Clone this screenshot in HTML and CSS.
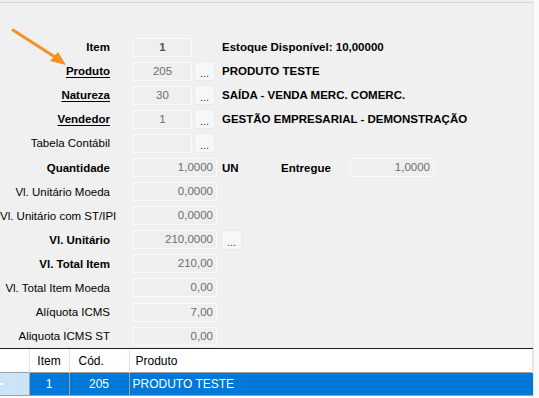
FILE: index.html
```html
<!DOCTYPE html>
<html lang="pt-BR">
<head>
    <meta charset="UTF-8">
    <title>Item do Pedido</title>
    <link rel="stylesheet" href="styles.css">
</head>
<body>
    <div class="window">
        <div class="main">
            <div class="topline"></div>

            <!-- seta de destaque -->
            <svg class="arrow" width="70" height="70" viewBox="0 0 70 70">
                <line x1="13" y1="30" x2="58" y2="59" stroke="#f7901e" stroke-width="3" stroke-linecap="round"/>
                <polygon points="66,65 50,61 58,52" fill="#f7901e"/>
            </svg>

            <div class="form">
                <div class="row">
                    <label class="lbl bold">Item</label>
                    <div class="box short center strong">1</div>
                    <span class="info spaced">Estoque Disponível: 10,00000</span>
                </div>
                <div class="row">
                    <label class="lbl bold link">Produto</label>
                    <div class="box short center">205</div>
                    <button class="dots">...</button>
                    <span class="info">PRODUTO TESTE</span>
                </div>
                <div class="row">
                    <label class="lbl bold link">Natureza</label>
                    <div class="box short center">30</div>
                    <button class="dots">...</button>
                    <span class="info">SAÍDA - VENDA MERC. COMERC.</span>
                </div>
                <div class="row">
                    <label class="lbl bold link">Vendedor</label>
                    <div class="box short center">1</div>
                    <button class="dots">...</button>
                    <span class="info">GESTÃO EMPRESARIAL - DEMONSTRAÇÃO</span>
                </div>
                <div class="row">
                    <label class="lbl">Tabela Contábil</label>
                    <div class="box short"></div>
                    <button class="dots">...</button>
                </div>
                <div class="row">
                    <label class="lbl bold">Quantidade</label>
                    <div class="box long">1,0000</div>
                    <span class="info unit">UN</span>
                    <span class="info entregue">Entregue</span>
                    <div class="box long">1,0000</div>
                </div>
                <div class="row">
                    <label class="lbl">Vl. Unitário Moeda</label>
                    <div class="box long">0,0000</div>
                </div>
                <div class="row">
                    <label class="lbl">Vl. Unitário com ST/IPI</label>
                    <div class="box long">0,0000</div>
                </div>
                <div class="row">
                    <label class="lbl bold">Vl. Unitário</label>
                    <div class="box long">210,0000</div>
                    <button class="dots wide">...</button>
                </div>
                <div class="row">
                    <label class="lbl bold">Vl. Total Item</label>
                    <div class="box long">210,00</div>
                </div>
                <div class="row">
                    <label class="lbl">Vl. Total Item Moeda</label>
                    <div class="box long">0,00</div>
                </div>
                <div class="row">
                    <label class="lbl">Alíquota ICMS</label>
                    <div class="box long">7,00</div>
                </div>
                <div class="row">
                    <label class="lbl">Aliquota ICMS ST</label>
                    <div class="box long">0,00</div>
                </div>
            </div>

            <!-- grade de itens -->
            <div class="gridwrap">
                <table class="grid">
                    <tr class="head">
                        <td class="c0"></td>
                        <td class="c1">Item</td>
                        <td class="c2">Cód.</td>
                        <td class="c3">Produto</td>
                    </tr>
                    <tr class="sel">
                        <td class="c0"><span class="mark"></span></td>
                        <td class="c1">1</td>
                        <td class="c2 mid">205</td>
                        <td class="c3">PRODUTO TESTE</td>
                    </tr>
                </table>
            </div>
        </div>
        <div class="side"></div>
    </div>
</body>
</html>
```

FILE: styles.css
```css
*{
    margin: 0;
    padding: 0;
    box-sizing: border-box;
}
body{
    width: 539px;
    height: 398px;
    overflow: hidden;
    background: #f0f0f0;
    font-family: "Liberation Sans", Arial, sans-serif;
    font-size: 11px;
    color: #000;
}
.window{
    display: flex;
    height: 398px;
}
.main{
    width: 533px;
    position: relative;
    display: flex;
    flex-direction: column;
}
.side{
    width: 6px;
    background: #fafafa;
    border-left: 1px solid #e8e8e8;
}
.topline{
    height: 3px;
    border-bottom: 1px solid #d6d6d6;
}
.arrow{
    position: absolute;
    left: 0;
    top: 0;
}
.form{
    padding-top: 32px;
    height: 345px;
    flex-shrink: 0;
}
.row{
    height: 24.1px;
    display: flex;
    align-items: center;
}
.lbl{
    width: 110px;
    text-align: right;
    margin-right: 23px;
    white-space: nowrap;
    font-size: 11.5px;
}
.bold{
    font-weight: bold;
}
.link{
    text-decoration: underline;
    text-underline-offset: 2px;
}
.box{
    height: 19px;
    line-height: 17px;
    border: 1px solid #fafafa;
    background: #efefef;
    color: #6d6d6d;
    font-size: 11.5px;
    text-align: right;
    padding: 0 3px;
}
.short{
    width: 59px;
}
.long{
    width: 84px;
}
.center{
    text-align: center;
}
.strong{
    font-weight: bold;
    color: #555;
}
.dots{
    width: 21px;
    height: 20px;
    margin-left: 2px;
    border: 1px solid #ececec;
    border-radius: 3px;
    background: #f7f7f7;
    font-family: "Liberation Sans", Arial, sans-serif;
    font-size: 11px;
    color: #333;
    padding-top: 4px;
}
.dots.wide{
    margin-left: 4px;
}
.info{
    font-weight: bold;
    font-size: 11.5px;
    margin-left: 7px;
    white-space: nowrap;
}
.info.spaced{
    margin-left: 30px;
}
.info.unit{
    margin-left: 5px;
    width: 59px;
}
.info.entregue{
    margin-left: 0;
    width: 69px;
}
.gridwrap{
    flex: 1;
    background: #fff;
    border-top: 1px solid #1e1e1e;
}
.grid{
    width: 533px;
    border-collapse: collapse;
    font-size: 12px;
}
.grid td{
    white-space: nowrap;
}
.head td{
    border-right: 1px solid #e3e3e3;
    height: 23px;
    padding-top: 2px;
}
.c0{
    width: 29px;
}
.c1{
    width: 40px;
    text-align: center;
}
.c2{
    width: 60px;
    padding-left: 9px;
}
.c3{
    padding-left: 6px;
}
.sel td{
    background: #0078d7;
    color: #fff;
    border: 1px solid #a0a0a0;
    border-left: none;
    height: 23px;
}
.sel td.c0{
    background: #cce4f7;
    border-color: #a0a0a0;
}
.sel td.c3{
    padding-left: 3px;
    border-right: none;
}
.mid{
    text-align: center;
    padding-left: 0;
}
.mark{
    display: block;
    width: 3px;
    height: 2px;
    background: #fff;
}
```
